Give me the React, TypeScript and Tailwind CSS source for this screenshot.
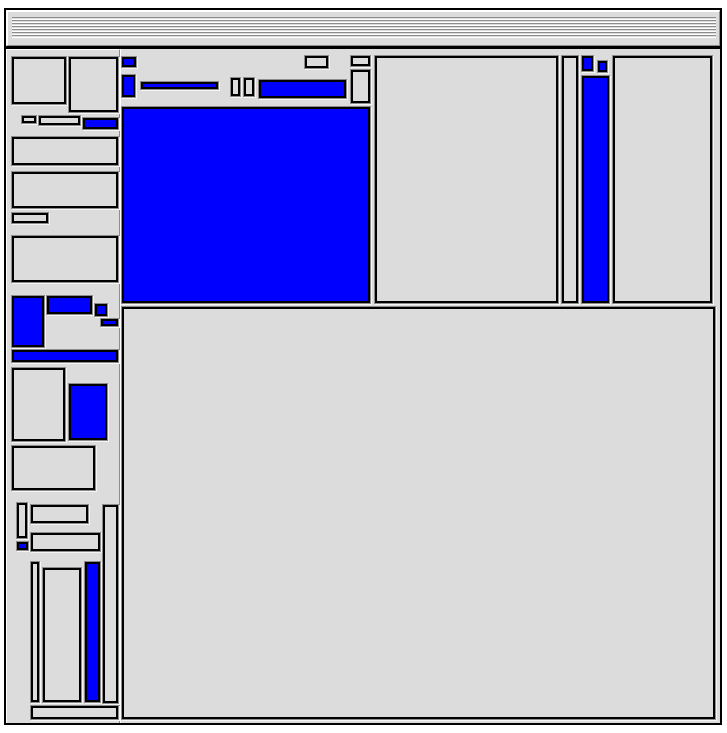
import React from 'react';

// one sunken cell: 2px black rim, grey groove around it
const Cell = ({ c, blue }: { c: string; blue?: boolean }) => (
  <div
    className={`shrink-0 border-2 border-black shadow-[0_0_0_1px_#8c8c8c,1px_1px_0_1px_#f6f6f6] ${
      blue ? 'bg-[#0000ff]' : 'bg-[#dcdcdc]'
    } ${c}`}
  />
);

const stripes = [0, 1, 2, 3, 4, 5, 6];

const LeftColumn = () => (
  <div className="flex flex-col w-[106px]">
    <div className="flex items-start">
      <Cell c="w-[54px] h-[47px]" />
      <Cell c="ml-[3px] w-[49px] h-[55px]" />
    </div>
    <div className="flex items-start mt-[4px]">
      <Cell c="ml-[10px] w-[14px] h-[7px]" />
      <Cell c="ml-[3px] w-[41px] h-[9px]" />
      <Cell blue c="ml-[3px] mt-[2px] w-[35px] h-[11px]" />
    </div>
    <Cell c="mt-[8px] w-[106px] h-[28px]" />
    <Cell c="mt-[7px] w-[106px] h-[36px]" />
    <Cell c="mt-[5px] w-[36px] h-[10px]" />
    <Cell c="mt-[13px] w-[106px] h-[46px]" />
    <div className="flex items-start mt-[14px]">
      <Cell blue c="w-[32px] h-[51px]" />
      <Cell blue c="ml-[3px] w-[45px] h-[18px]" />
      <div className="ml-[3px] flex flex-col">
        <Cell blue c="mt-[8px] w-[12px] h-[12px]" />
        <Cell blue c="ml-[6px] mt-[3px] w-[17px] h-[7px]" />
      </div>
    </div>
    <Cell blue c="mt-[3px] w-[106px] h-[12px]" />
    <div className="flex items-start mt-[6px]">
      <Cell c="w-[53px] h-[73px]" />
      <Cell blue c="ml-[4px] mt-[16px] w-[38px] h-[56px]" />
    </div>
    <Cell c="mt-[5px] w-[83px] h-[44px]" />
    <div className="flex items-start mt-[13px]">
      <div className="ml-[5px] flex flex-col w-[83px]">
        <div className="flex items-start">
          <div className="flex flex-col">
            <Cell c="w-[10px] h-[35px]" />
            <Cell blue c="mt-[4px] w-[11px] h-[8px]" />
          </div>
          <div className="ml-[3px] flex flex-col">
            <Cell c="mt-[2px] w-[57px] h-[18px]" />
            <Cell c="mt-[10px] w-[69px] h-[18px]" />
          </div>
        </div>
        <div className="flex items-start mt-[11px] ml-[14px]">
          <Cell c="w-[8px] h-[140px]" />
          <Cell c="ml-[4px] mt-[6px] w-[38px] h-[134px]" />
          <Cell blue c="ml-[4px] w-[15px] h-[140px]" />
        </div>
      </div>
      <Cell c="ml-[3px] mt-[2px] w-[15px] h-[198px]" />
    </div>
    <Cell c="ml-[19px] mt-[3px] w-[87px] h-[13px]" />
  </div>
);

const TopCluster = () => (
  <div className="flex flex-col w-[248px]">
    <div className="flex items-start">
      <div className="flex flex-col">
        <div className="flex items-start">
          <Cell blue c="mt-[1px] w-[14px] h-[10px]" />
          <Cell c="ml-[169px] w-[23px] h-[12px]" />
        </div>
        <div className="flex items-start mt-[7px]">
          <Cell blue c="w-[13px] h-[22px]" />
          <Cell blue c="ml-[6px] mt-[7px] w-[77px] h-[7px]" />
          <Cell c="ml-[13px] mt-[3px] w-[9px] h-[18px]" />
          <Cell c="ml-[4px] mt-[3px] w-[10px] h-[18px]" />
          <Cell blue c="ml-[5px] mt-[5px] w-[87px] h-[18px]" />
        </div>
      </div>
      <div className="ml-[5px] flex flex-col">
        <Cell c="w-[19px] h-[10px]" />
        <Cell c="mt-[4px] w-[19px] h-[33px]" />
      </div>
    </div>
    <Cell blue c="mt-[4px] w-[248px] h-[196px]" />
  </div>
);

export default function App() {
  return (
    <div className="w-[727px] h-[733px] bg-white pl-[4px] pt-[8px]">
      <div className="w-[718px] h-[717px] border-2 border-black bg-[#dcdcdc] flex flex-col">
        <div className="h-[36px] shrink-0 border-t-2 border-l-2 border-white border-b border-r border-b-[#8c8c8c] border-r-[#8c8c8c] flex flex-col pt-[5px] pl-[4px] pr-[3px]">
          {stripes.map((i) => (
            <div key={i} className="h-[3px] border-t border-[#8c8c8c] border-b border-b-white" />
          ))}
        </div>
        <div className="h-[3px] shrink-0 bg-black" />
        <div className="flex flex-1">
          <div className="w-[114px] shrink-0 border-l border-t border-white border-r border-r-[#8c8c8c] pl-[5px] pt-[7px]">
            <LeftColumn />
          </div>
          <div className="flex-1 border-l border-white pl-[1px] pt-[7px] flex flex-col">
            <div className="flex items-start">
              <TopCluster />
              <Cell c="ml-[5px] w-[183px] h-[247px]" />
              <Cell c="ml-[4px] w-[16px] h-[247px]" />
              <div className="ml-[4px] flex flex-col">
                <div className="flex items-start">
                  <Cell blue c="w-[11px] h-[15px]" />
                  <Cell blue c="ml-[5px] mt-[5px] w-[9px] h-[11px]" />
                </div>
                <Cell blue c="mt-[4px] w-[27px] h-[227px]" />
              </div>
              <Cell c="ml-[4px] w-[99px] h-[247px]" />
            </div>
            <Cell c="mt-[4px] w-[593px] h-[412px]" />
          </div>
        </div>
      </div>
    </div>
  );
}
